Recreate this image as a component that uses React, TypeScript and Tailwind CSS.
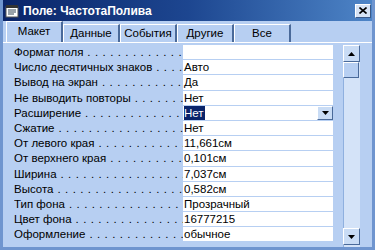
const rows: [string, string][] = [
  ["Формат поля", ""],
  ["Число десятичных знаков", "Авто"],
  ["Вывод на экран", "Да"],
  ["Не выводить повторы", "Нет"],
  ["Расширение", "Нет"],
  ["Сжатие", "Нет"],
  ["От левого края", "11,661см"],
  ["От верхнего края", "0,101см"],
  ["Ширина", "7,037см"],
  ["Высота", "0,582см"],
  ["Тип фона", "Прозрачный"],
  ["Цвет фона", "16777215"],
  ["Оформление", "обычное"],
];

const tabs = ["Макет", "Данные", "События", "Другие", "Все"];
const dots = ". . . . . . . . . . . . . . . . . . . . . . . . . . . . . . . . . . .";

function Arrow({ up }: { up?: boolean }) {
  return (
    <svg width="7" height="4" viewBox="0 0 7 4">
      <path d={up ? "M3.5 0 L7 4 L0 4 Z" : "M0 0 L7 0 L3.5 4 Z"} fill="#000" />
    </svg>
  );
}

function Btn({ up, className }: { up?: boolean; className?: string }) {
  return (
    <div
      className={`flex items-center justify-center bg-[#c9dcf5] border border-t-white border-l-white border-r-[#4a6a9a] border-b-[#4a6a9a] ${className ?? ""}`}
    >
      <Arrow up={up} />
    </div>
  );
}

export default function App() {
  return (
    <div
      className="w-[375px] h-[250px] flex flex-col bg-[#b7cff2] border-l-[3px] border-r-[3px] border-b-[3px] border-[#6f95cf] overflow-hidden"
      style={{ fontFamily: '"Liberation Sans", Arial, sans-serif' }}
    >
      {/* title bar */}
      <div className="h-[21px] shrink-0 flex items-center px-[3px] gap-[4px] bg-gradient-to-r from-[#0a2468] via-[#1d4690] to-[#4f86c8] -mx-[3px]">
        <svg width="14" height="14" viewBox="0 0 14 14" className="ml-[2px]">
          <rect x="1" y="3" width="12" height="10" fill="#fff" stroke="#555" />
          <rect x="1" y="1" width="12" height="3" fill="#333" />
          <path d="M3 6h8M3 8h8M3 10h6" stroke="#345" />
        </svg>
        <span className="text-white font-bold text-[12px] leading-none">Поле: ЧастотаПолива</span>
        <div className="ml-auto mr-[1px] w-[16px] h-[14px] bg-[#d6e3f5] border border-t-white border-l-white border-r-[#3a5a8a] border-b-[#3a5a8a] flex items-center justify-center">
          <svg width="8" height="7" viewBox="0 0 8 7">
            <path d="M0.5 0.5 L7.5 6.5 M7.5 0.5 L0.5 6.5" stroke="#000" strokeWidth="1.6" />
          </svg>
        </div>
      </div>

      {/* tabs */}
      <div className="h-[21px] shrink-0 flex items-end pl-[3px] text-[11.5px]">
        {tabs.map((t, i) => (
          <div
            key={t}
            className={
              i === 0
                ? "w-[57px] h-[21px] flex items-center justify-center border-t border-l border-white border-r-2 border-r-[#4a6a9a] bg-[#b7cff2]"
                : "w-[57px] h-[18px] flex items-center justify-center border-t border-l border-white border-r-2 border-r-[#4a6a9a] bg-[#b7cff2]"
            }
          >
            {t}
          </div>
        ))}
      </div>

      {/* body */}
      <div className="flex-1 flex border-t border-white pt-[2px] pr-[12px]">
        <div className="flex-1 flex flex-col gap-[1px] pl-[11px]">
          {rows.map(([label, value], i) => (
            <div key={label} className="h-[14.2px] flex text-[11.5px] leading-[14px]">
              <div className="w-[169px] flex overflow-hidden whitespace-nowrap text-black">
                <span className="shrink-0">{label}</span>
                <span className="overflow-hidden pl-[4px] tracking-[0.6px]">{dots}</span>
              </div>
              <div className="flex-1 bg-white flex items-center pl-[1px] whitespace-nowrap">
                {i === 4 ? (
                  <>
                    <span className="bg-[#0a246a] text-white pr-[1px]">{value}</span>
                    <Btn className="ml-auto w-[16px] h-[14px]" />
                  </>
                ) : (
                  <span>{value}</span>
                )}
              </div>
            </div>
          ))}
        </div>
        <div className="w-[17px] ml-[10px] flex flex-col bg-[#d4e3f8] border-l border-[#8fb0df]">
          <Btn up className="w-[17px] h-[17px] -ml-px" />
          <div className="w-[16px] h-[16px] bg-[#b7cff2] border border-t-white border-l-white border-r-[#4a6a9a] border-b-[#4a6a9a] -ml-px" />
          <div className="flex-1" />
          <Btn className="w-[17px] h-[17px] -ml-px mb-[2px]" />
        </div>
      </div>
    </div>
  );
}
